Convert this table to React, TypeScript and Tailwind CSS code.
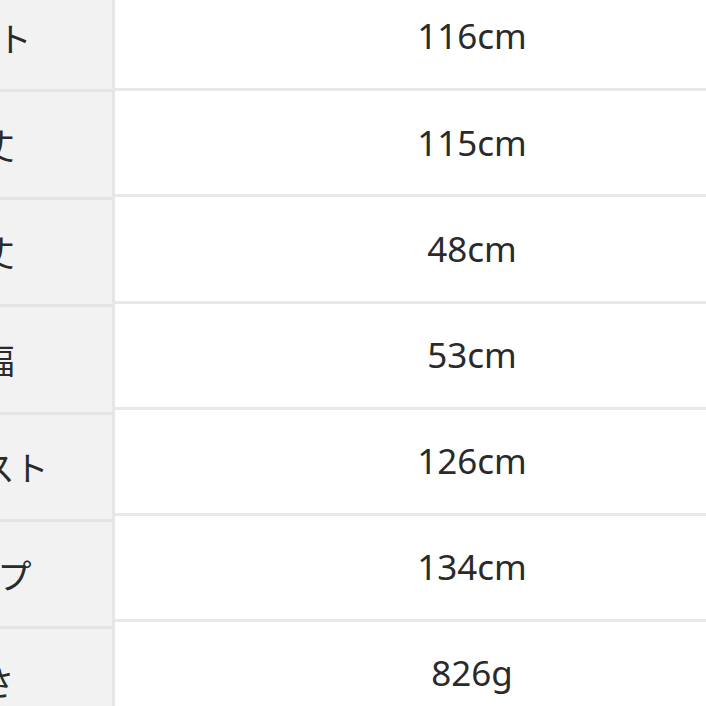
import React from "react";

const rows = [
  { label: "バスト", value: "116cm" },
  { label: "着丈", value: "115cm" },
  { label: "袖丈", value: "48cm" },
  { label: "肩幅", value: "53cm" },
  { label: "ウエスト", value: "126cm" },
  { label: "ヒップ", value: "134cm" },
  { label: "重さ", value: "826g" },
  { label: "", value: "" },
];

export default function App() {
  return (
    <div className="w-[706px] h-[706px] overflow-hidden bg-white">
      <div className="flex -mt-[15px] -ml-[151px] w-[980px]">
        <div className="w-[266px] shrink-0 bg-[#f2f2f2] border-r-[3px] border-[#e6e6e6]">
          {rows.map((r, i) => (
            <div
              key={i}
              className="h-[107.4px] border-b-[3px] border-[#e4e4e4] flex items-center justify-center text-[34px] text-[#2a2a2a]"
              style={{ fontFamily: '"Noto Sans CJK JP", "Noto Sans", sans-serif' }}
            >
              {r.label}
            </div>
          ))}
        </div>
        <div className="w-[714px] shrink-0 bg-white">
          {rows.map((r, i) => (
            <div
              key={i}
              className="h-[106.2px] border-b-[3px] border-[#e8e8e8] flex items-center justify-center text-[35px] text-[#2a2a2a]"
              style={{ fontFamily: '"Noto Sans", "Open Sans", sans-serif' }}
            >
              {r.value}
            </div>
          ))}
        </div>
      </div>
    </div>
  );
}
